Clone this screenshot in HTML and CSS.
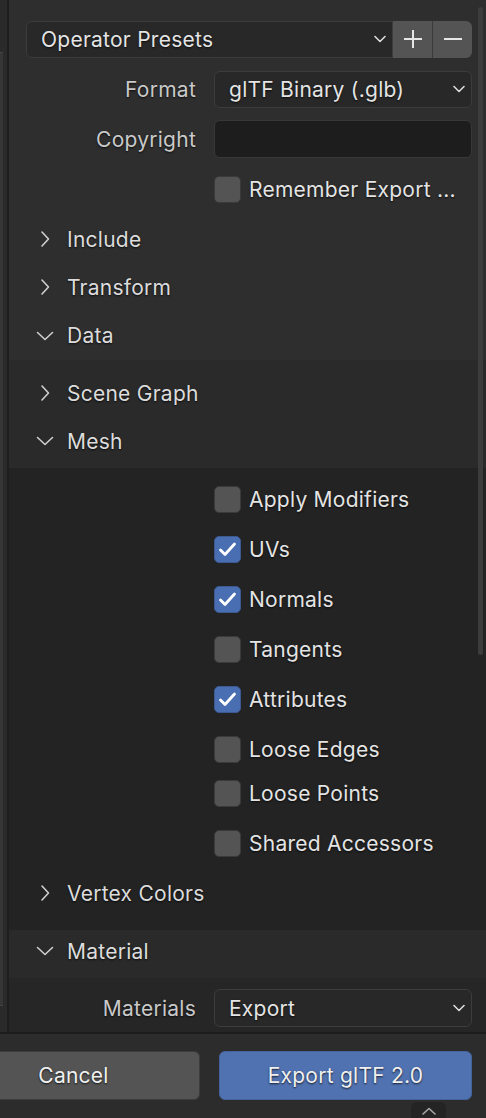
FILE: index.html
```html
<!DOCTYPE html>
<html>
<head>
<meta charset="utf-8">
<link rel="stylesheet" href="styles.css">
</head>
<body>
<div class="screen">
  <div class="side"><div class="side-box"></div></div>
  <div class="dialog">
    <div class="content">
      <div class="row presets">
        <div class="preset-select">
          <span>Operator Presets</span>
          <svg class="dd" width="12" height="8" viewBox="0 0 12 8"><path d="M1 1.5 L6 6.5 L11 1.5" /></svg>
        </div>
        <div class="pbtn"><svg width="18" height="18" viewBox="0 0 18 18"><path d="M9 0 V18 M0 9 H18"/></svg></div>
        <div class="pbtn last"><svg width="18" height="18" viewBox="0 0 18 18"><path d="M0 9 H18"/></svg></div>
      </div>
      <div class="row prop">
        <span class="lbl">Format</span>
        <div class="select"><span>glTF Binary (.glb)</span><svg class="dd" width="12" height="8" viewBox="0 0 12 8"><path d="M1 1.5 L6 6.5 L11 1.5" /></svg></div>
      </div>
      <div class="row prop">
        <span class="lbl">Copyright</span>
        <div class="input"></div>
      </div>
      <div class="check-row remember"><span class="box"></span><span>Remember Export ...</span></div>
      <div class="hdr"><svg class="chev" width="20" height="20" viewBox="0 0 20 20"><path d="M7 3 L13.5 10 L7 17"/></svg><span>Include</span></div>
      <div class="hdr"><svg class="chev" width="20" height="20" viewBox="0 0 20 20"><path d="M7 3 L13.5 10 L7 17"/></svg><span>Transform</span></div>
      <div class="hdr data"><svg class="chev" width="20" height="20" viewBox="0 0 20 20"><path d="M2.5 6.5 L10 13.5 L17.5 6.5"/></svg><span>Data</span></div>
    </div>
    <div class="sub">
      <div class="hdr"><svg class="chev" width="20" height="20" viewBox="0 0 20 20"><path d="M7 3 L13.5 10 L7 17"/></svg><span>Scene Graph</span></div>
      <div class="hdr"><svg class="chev" width="20" height="20" viewBox="0 0 20 20"><path d="M2.5 6.5 L10 13.5 L17.5 6.5"/></svg><span>Mesh</span></div>
      <div class="mesh">
        <div class="check-row"><span class="box"></span><span>Apply Modifiers</span></div>
        <div class="check-row"><span class="box on"><svg width="25" height="25" viewBox="0 0 25 25"><path d="M5.5 13 L10 17.5 L19.5 7"/></svg></span><span>UVs</span></div>
        <div class="check-row"><span class="box on"><svg width="25" height="25" viewBox="0 0 25 25"><path d="M5.5 13 L10 17.5 L19.5 7"/></svg></span><span>Normals</span></div>
        <div class="check-row"><span class="box"></span><span>Tangents</span></div>
        <div class="check-row"><span class="box on"><svg width="25" height="25" viewBox="0 0 25 25"><path d="M5.5 13 L10 17.5 L19.5 7"/></svg></span><span>Attributes</span></div>
        <div class="group">
          <div class="check-row tight"><span class="box"></span><span>Loose Edges</span></div>
          <div class="check-row tight"><span class="box"></span><span>Loose Points</span></div>
        </div>
        <div class="check-row"><span class="box"></span><span>Shared Accessors</span></div>
        <div class="hdr vc"><svg class="chev" width="20" height="20" viewBox="0 0 20 20"><path d="M7 3 L13.5 10 L7 17"/></svg><span>Vertex Colors</span></div>
      </div>
      <div class="hdr"><svg class="chev" width="20" height="20" viewBox="0 0 20 20"><path d="M2.5 6.5 L10 13.5 L17.5 6.5"/></svg><span>Material</span></div>
      <div class="mat">
        <div class="row prop mrow">
          <span class="lbl">Materials</span>
          <div class="select"><span>Export</span><svg class="dd" width="12" height="8" viewBox="0 0 12 8"><path d="M1 1.5 L6 6.5 L11 1.5" /></svg></div>
        </div>
      </div>
    </div>
    <div class="thumb"></div>
  </div>
</div>
<div class="footer">
  <div class="btn cancel">Cancel</div>
  <div class="btn export">Export glTF 2.0</div>
  <div class="tab"><svg width="14" height="8" viewBox="0 0 14 8"><path d="M1 7 L7 1.5 L13 7"/></svg></div>
</div>
</body>
</html>
```
FILE: styles.css
```css
html, body {
  margin: 0;
  padding: 0;
}
body {
  width: 486px;
  height: 1118px;
  overflow: hidden;
  background: #2c2c2c;
  font-family: "Inter", "Noto Sans", sans-serif;
  font-size: 21px;
  letter-spacing: 0.25px;
  color: #e2e2e2;
  text-shadow: 0 1px 2px rgba(0, 0, 0, 0.75);
}
svg path {
  fill: none;
  stroke-linecap: round;
  stroke-linejoin: round;
}
.screen {
  display: flex;
  height: 1032px;
}
.side {
  width: 7px;
  background: #2a2a2a;
  border-right: 2px solid #1e1e1e;
  flex-shrink: 0;
}
.side-box {
  margin-top: 52px;
  height: 952px;
  width: 3px;
  background: #363636;
  border-top: 1px solid #444;
  border-bottom: 1px solid #444;
}
.dialog {
  flex: 1;
  position: relative;
  display: flex;
  flex-direction: column;
  background: #2e2e2e;
}
.content {
  padding-top: 14px;
}
.row {
  display: flex;
  align-items: center;
  height: 50px;
  padding-right: 14px;
}
.presets {
  padding-left: 17px;
}
.preset-select, .select {
  flex: 1;
  height: 37px;
  box-sizing: border-box;
  background: #282828;
  border: 1px solid #3c3c3c;
  border-radius: 6px;
  display: flex;
  align-items: center;
  justify-content: space-between;
  padding: 0 6px 0 14px;
  color: #e4e4e4;
}
.preset-select {
  border-radius: 6px 0 0 6px;
}
.dd path {
  stroke: #dcdcdc;
  stroke-width: 1.6;
}
.pbtn {
  width: 39px;
  height: 37px;
  background: #545454;
  display: flex;
  align-items: center;
  justify-content: center;
}
.pbtn.last {
  width: 39px;
  border-left: 1px solid #3a3a3a;
  border-radius: 0 6px 6px 0;
}
.pbtn path {
  stroke: #e6e6e6;
  stroke-width: 2;
  stroke-linecap: butt;
}
.lbl {
  width: 187px;
  text-align: right;
  margin-right: 18px;
  color: #c9c9c9;
  flex-shrink: 0;
}
.input {
  flex: 1;
  height: 38px;
  box-sizing: border-box;
  background: #1d1d1d;
  border: 1px solid #383838;
  border-radius: 6px;
}
.check-row {
  height: 50px;
  display: flex;
  align-items: center;
  gap: 8px;
  padding-left: 205px;
  color: #e4e4e4;
}
.check-row.remember {
  height: 51px;
}
.check-row.tight {
  height: 44px;
}
.group {
  margin: 3px 0;
}
.box {
  width: 27px;
  height: 27px;
  box-sizing: border-box;
  background: #545454;
  border: 1px solid #3a3a3a;
  border-radius: 5px;
  flex-shrink: 0;
  display: flex;
  align-items: center;
  justify-content: center;
}
.box.on {
  background: #4a6eb2;
  border-color: #3c5a92;
}
.box path {
  stroke: #ffffff;
  stroke-width: 2.8;
}
.hdr {
  height: 48px;
  box-sizing: border-box;
  display: flex;
  align-items: center;
  gap: 12px;
  padding-left: 26px;
  color: #dcdcdc;
}
.hdr.data {
  height: 49px;
}
.chev {
  flex-shrink: 0;
}
.chev path {
  stroke: #cfcfcf;
  stroke-width: 1.6;
}
.sub {
  background: #2a2a2a;
  padding-top: 12px;
}
.sub .hdr {
  padding-bottom: 6px;
}
.sub .hdr.vc {
  height: 50px;
  padding-bottom: 0;
}
.mesh {
  background: #232323;
  padding-top: 6px;
  padding-bottom: 12px;
}
.mat {
  background: #262626;
  padding-top: 6px;
}
.mrow {
  height: 48px;
}
.mrow .select {
  height: 38px;
}
.thumb {
  position: absolute;
  left: 469px;
  top: 7px;
  width: 5px;
  height: 648px;
  background: #3c3c3c;
  border-radius: 3px;
}
.footer {
  position: relative;
  height: 84px;
  border-top: 2px solid #1d1d1d;
  background: #2c2c2c;
  display: flex;
  gap: 19px;
  padding-top: 17px;
  box-sizing: border-box;
}
.btn {
  width: 253px;
  height: 49px;
  flex-shrink: 0;
  box-sizing: border-box;
  border-radius: 6px;
  display: flex;
  align-items: center;
  justify-content: center;
  color: #f0f0f0;
}
.cancel {
  margin-left: -53px;
  background: #545454;
  border: 1px solid #3c3c3c;
}
.export {
  background: #5072b0;
  border: 1px solid #44639c;
}
.tab {
  position: absolute;
  left: 411px;
  top: 68px;
  width: 35px;
  height: 18px;
  background: #242424;
  border-radius: 6px 6px 0 0;
  display: flex;
  justify-content: center;
  align-items: center;
}
.tab path {
  stroke: #a8a8a8;
  stroke-width: 1.6;
}
```
